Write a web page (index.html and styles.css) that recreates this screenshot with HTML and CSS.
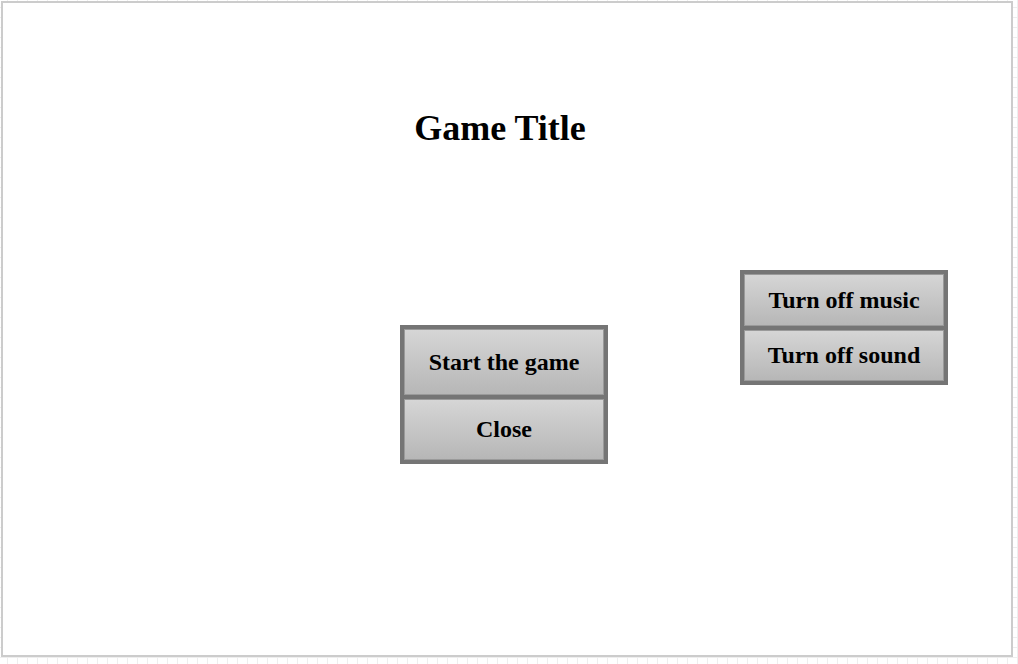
FILE: index.html
```html
<!DOCTYPE html>
<html lang="en">
<head>
<meta charset="utf-8">
<title>Game Title</title>
<link rel="stylesheet" href="styles.css">
</head>
<body>
<div class="frame">
  <h1 class="title">Game Title</h1>
  <div class="menus">
    <div class="group group-main">
      <div class="btn btn-start">Start the game</div>
      <div class="btn btn-close">Close</div>
    </div>
    <div class="group group-audio">
      <div class="btn btn-music">Turn off music</div>
      <div class="btn btn-sound">Turn off sound</div>
    </div>
  </div>
</div>
</body>
</html>
```
FILE: styles.css
```css
html, body {
  margin: 0;
  padding: 0;
}
body {
  width: 1018px;
  height: 664px;
  overflow: hidden;
  background-color: #ffffff;
  background-image:
    linear-gradient(to right, #eeeeee 1px, transparent 1px),
    linear-gradient(to bottom, #eeeeee 1px, transparent 1px);
  background-size: 10px 10px;
  background-position: 7px 7px;
  font-family: "Liberation Serif", "Times New Roman", serif;
  color: #000;
}
.frame {
  margin: 1px 0 0 1px;
  width: 1008px;
  height: 652px;
  border: 2px solid #cccccc;
  background: #ffffff;
}
.title {
  margin: 0;
  padding: 105px 14px 0 0;
  font-size: 36px;
  line-height: 40px;
  font-weight: bold;
  text-align: center;
}
.menus {
  display: flex;
  align-items: flex-start;
  margin-top: 122px;
}
.group {
  width: 204px;
  border: 2px solid #757575;
  background: #757575;
}
.group-main {
  margin-left: 397px;
  margin-top: 55px;
}
.group-audio {
  margin-left: 132px;
}
.btn {
  display: flex;
  align-items: center;
  justify-content: center;
  border: 2px solid #757575;
  background: linear-gradient(to bottom, #d6d6d6, #b6b6b6);
  box-shadow: inset 0 0 0 1px #9a9a9a;
  font-size: 24px;
  font-weight: bold;
  color: #000;
}
.btn-start { height: 66px; }
.btn-close { height: 61px; }
.btn-music { height: 52px; }
.btn-sound { height: 51px; }
```
